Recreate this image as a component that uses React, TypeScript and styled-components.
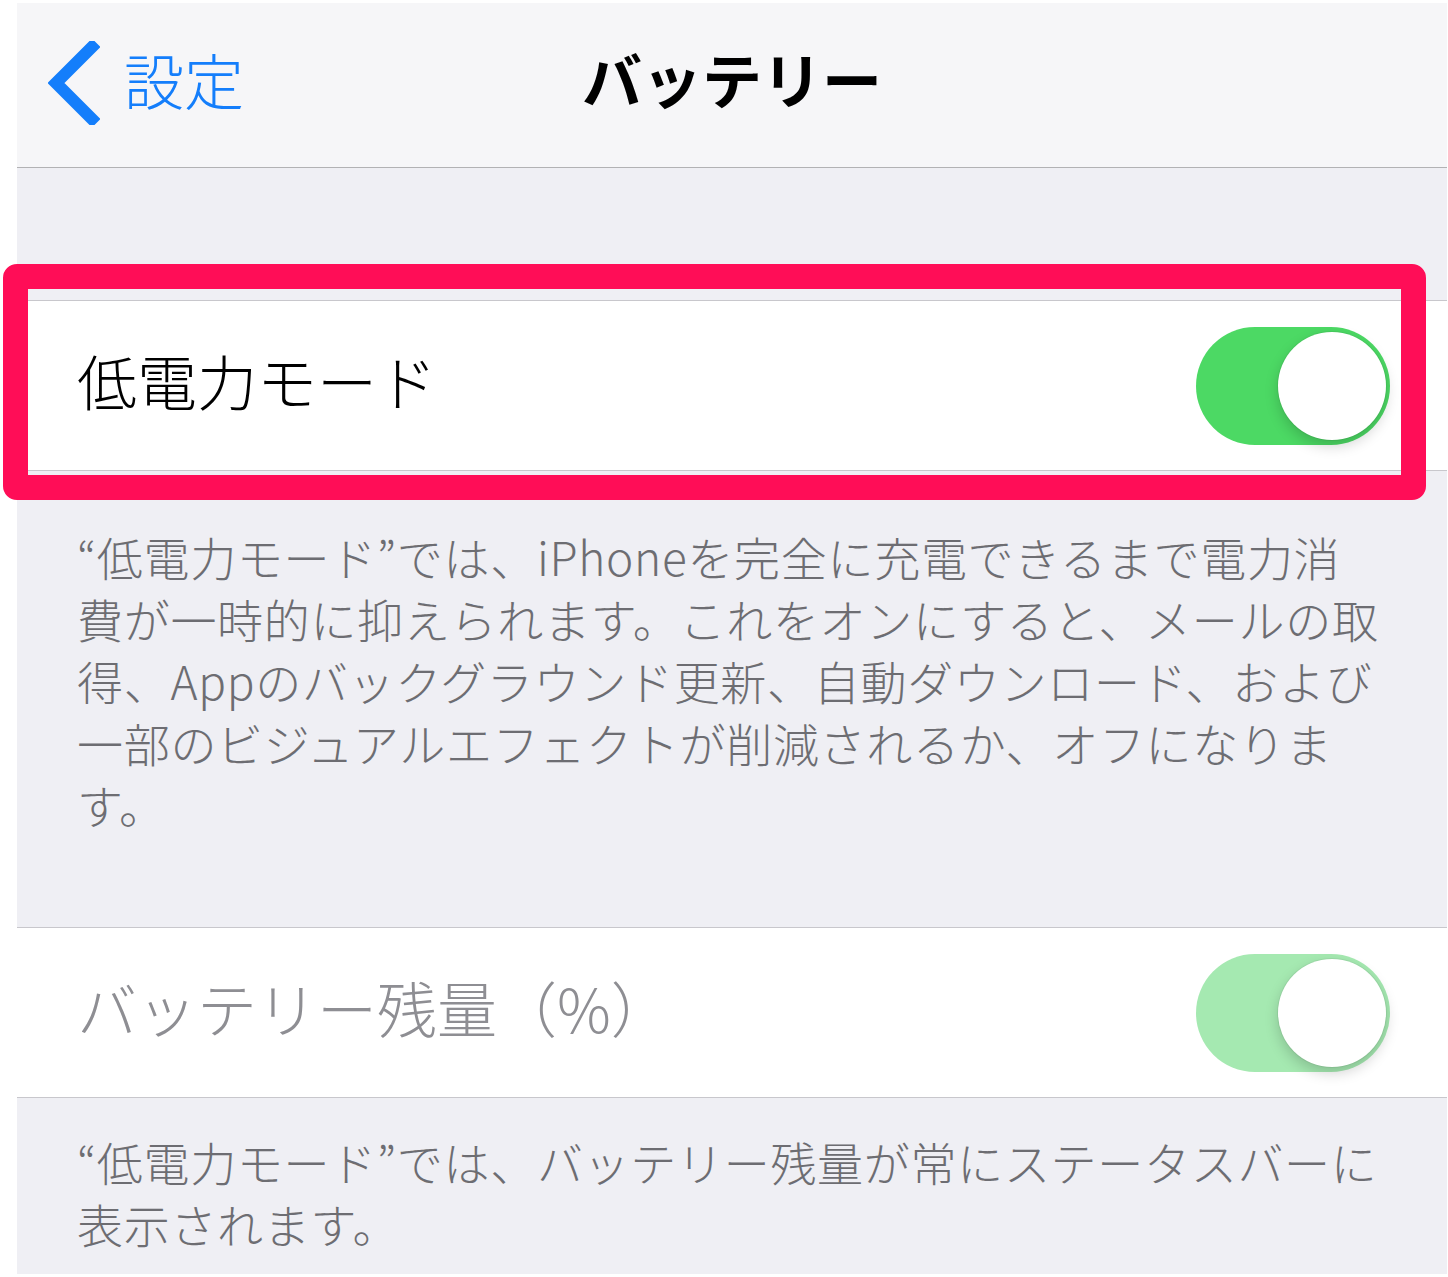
import React from 'react';
import styled, { createGlobalStyle } from 'styled-components';

const GlobalStyle = createGlobalStyle`
  html, body {
    margin: 0;
    padding: 0;
    background: #ffffff;
  }

  body {
    font-family: "Noto Sans CJK JP", "Noto Sans", sans-serif;
    -webkit-font-smoothing: antialiased;
  }
`;

const StyledScreen = styled.div`
  display: flex;
  flex-direction: column;
  width: 1430px;
  margin: 3px 0 0 17px;
  background: #efeff4;
`;

const NavBar = styled.div`
  display: grid;
  grid-template-columns: 1fr auto 1fr;
  align-items: center;
  height: 164px;
  background: #f6f6f8;
  border-bottom: 1px solid #b2b2b4;
`;

const BackButton = styled.div`
  display: flex;
  align-items: center;
  gap: 24px;
  padding-left: 31px;
  padding-bottom: 4px;
  color: #147efb;
  font-size: 60px;
  font-weight: 300;
  line-height: 1;

  span {
    padding-bottom: 8px;
  }

  svg {
    display: block;
  }
`;

const Title = styled.h1`
  margin: 0;
  padding-bottom: 14px;
  font-size: 60px;
  font-weight: bold;
  line-height: 1;
  color: #000000;
`;

const GroupGap = styled.div`
  height: 132px;
`;

const Group = styled.div`
  position: relative;
`;

const Row = styled.div`
  display: flex;
  align-items: center;
  justify-content: space-between;
  height: 169px;
  padding: 0 57px 0 60px;
  background: #ffffff;
  border-top: 1px solid #c8c7cc;
  border-bottom: 1px solid #c8c7cc;
`;

const Label = styled.span<{ $dim?: boolean }>`
  padding-bottom: 12px;
  font-size: 60px;
  font-weight: 300;
  line-height: 1;
  color: ${(p) => (p.$dim ? '#8e8e93' : '#000000')};
`;

const Toggle = styled.div<{ $dim?: boolean }>`
  position: relative;
  flex-shrink: 0;
  width: 194px;
  height: 118px;
  border-radius: 59px;
  background: ${(p) => (p.$dim ? '#a5e9b1' : '#4cd964')};
`;

const Knob = styled.div`
  position: absolute;
  top: 5px;
  right: 4px;
  width: 108px;
  height: 108px;
  border-radius: 50%;
  background: #ffffff;
  box-shadow: 0 0 0 1px rgba(0, 0, 0, 0.05), 0 6px 14px rgba(0, 0, 0, 0.18);
`;

const Highlight = styled.div`
  position: absolute;
  top: -36px;
  bottom: -29px;
  left: -14px;
  right: 21px;
  border: 25px solid #ff0d57;
  border-radius: 14px;
  pointer-events: none;
`;

const Footer = styled.div<{ $top: number; $bottom: number }>`
  padding: ${(p) => p.$top}px 60px ${(p) => p.$bottom}px;
  font-size: 46px;
  font-weight: 300;
  line-height: 62px;
  letter-spacing: 0.7px;
  color: #6d6d72;

  span {
    display: block;
    white-space: nowrap;
  }
`;

const lowPowerNote = [
  '“低電力モード”では、iPhoneを完全に充電できるまで電力消',
  '費が一時的に抑えられます。これをオンにすると、メールの取',
  '得、Appのバックグラウンド更新、自動ダウンロード、および',
  '一部のビジュアルエフェクトが削減されるか、オフになりま',
  'す。',
];

const percentNote = [
  '“低電力モード”では、バッテリー残量が常にステータスバーに',
  '表示されます。',
];

const App = () => {
  return (
    <>
      <GlobalStyle />
      <StyledScreen>
        <NavBar>
          <BackButton>
            <svg width="52" height="84" viewBox="0 0 52 84">
              <path
                d="M44 6 L8 42 L44 78"
                fill="none"
                stroke="#147efb"
                strokeWidth="12"
                strokeLinecap="square"
              />
            </svg>
            <span>設定</span>
          </BackButton>
          <Title>バッテリー</Title>
          <div />
        </NavBar>

        <GroupGap />

        <Group>
          <Row>
            <Label>低電力モード</Label>
            <Toggle>
              <Knob />
            </Toggle>
          </Row>
          <Highlight />
        </Group>

        <Footer $top={54} $bottom={92}>
          {lowPowerNote.map((line) => (
            <span key={line}>{line}</span>
          ))}
        </Footer>

        <Row>
          <Label $dim>バッテリー残量（%）</Label>
          <Toggle $dim>
            <Knob />
          </Toggle>
        </Row>

        <Footer $top={32} $bottom={20}>
          {percentNote.map((line) => (
            <span key={line}>{line}</span>
          ))}
        </Footer>
      </StyledScreen>
    </>
  );
};

export default App;
